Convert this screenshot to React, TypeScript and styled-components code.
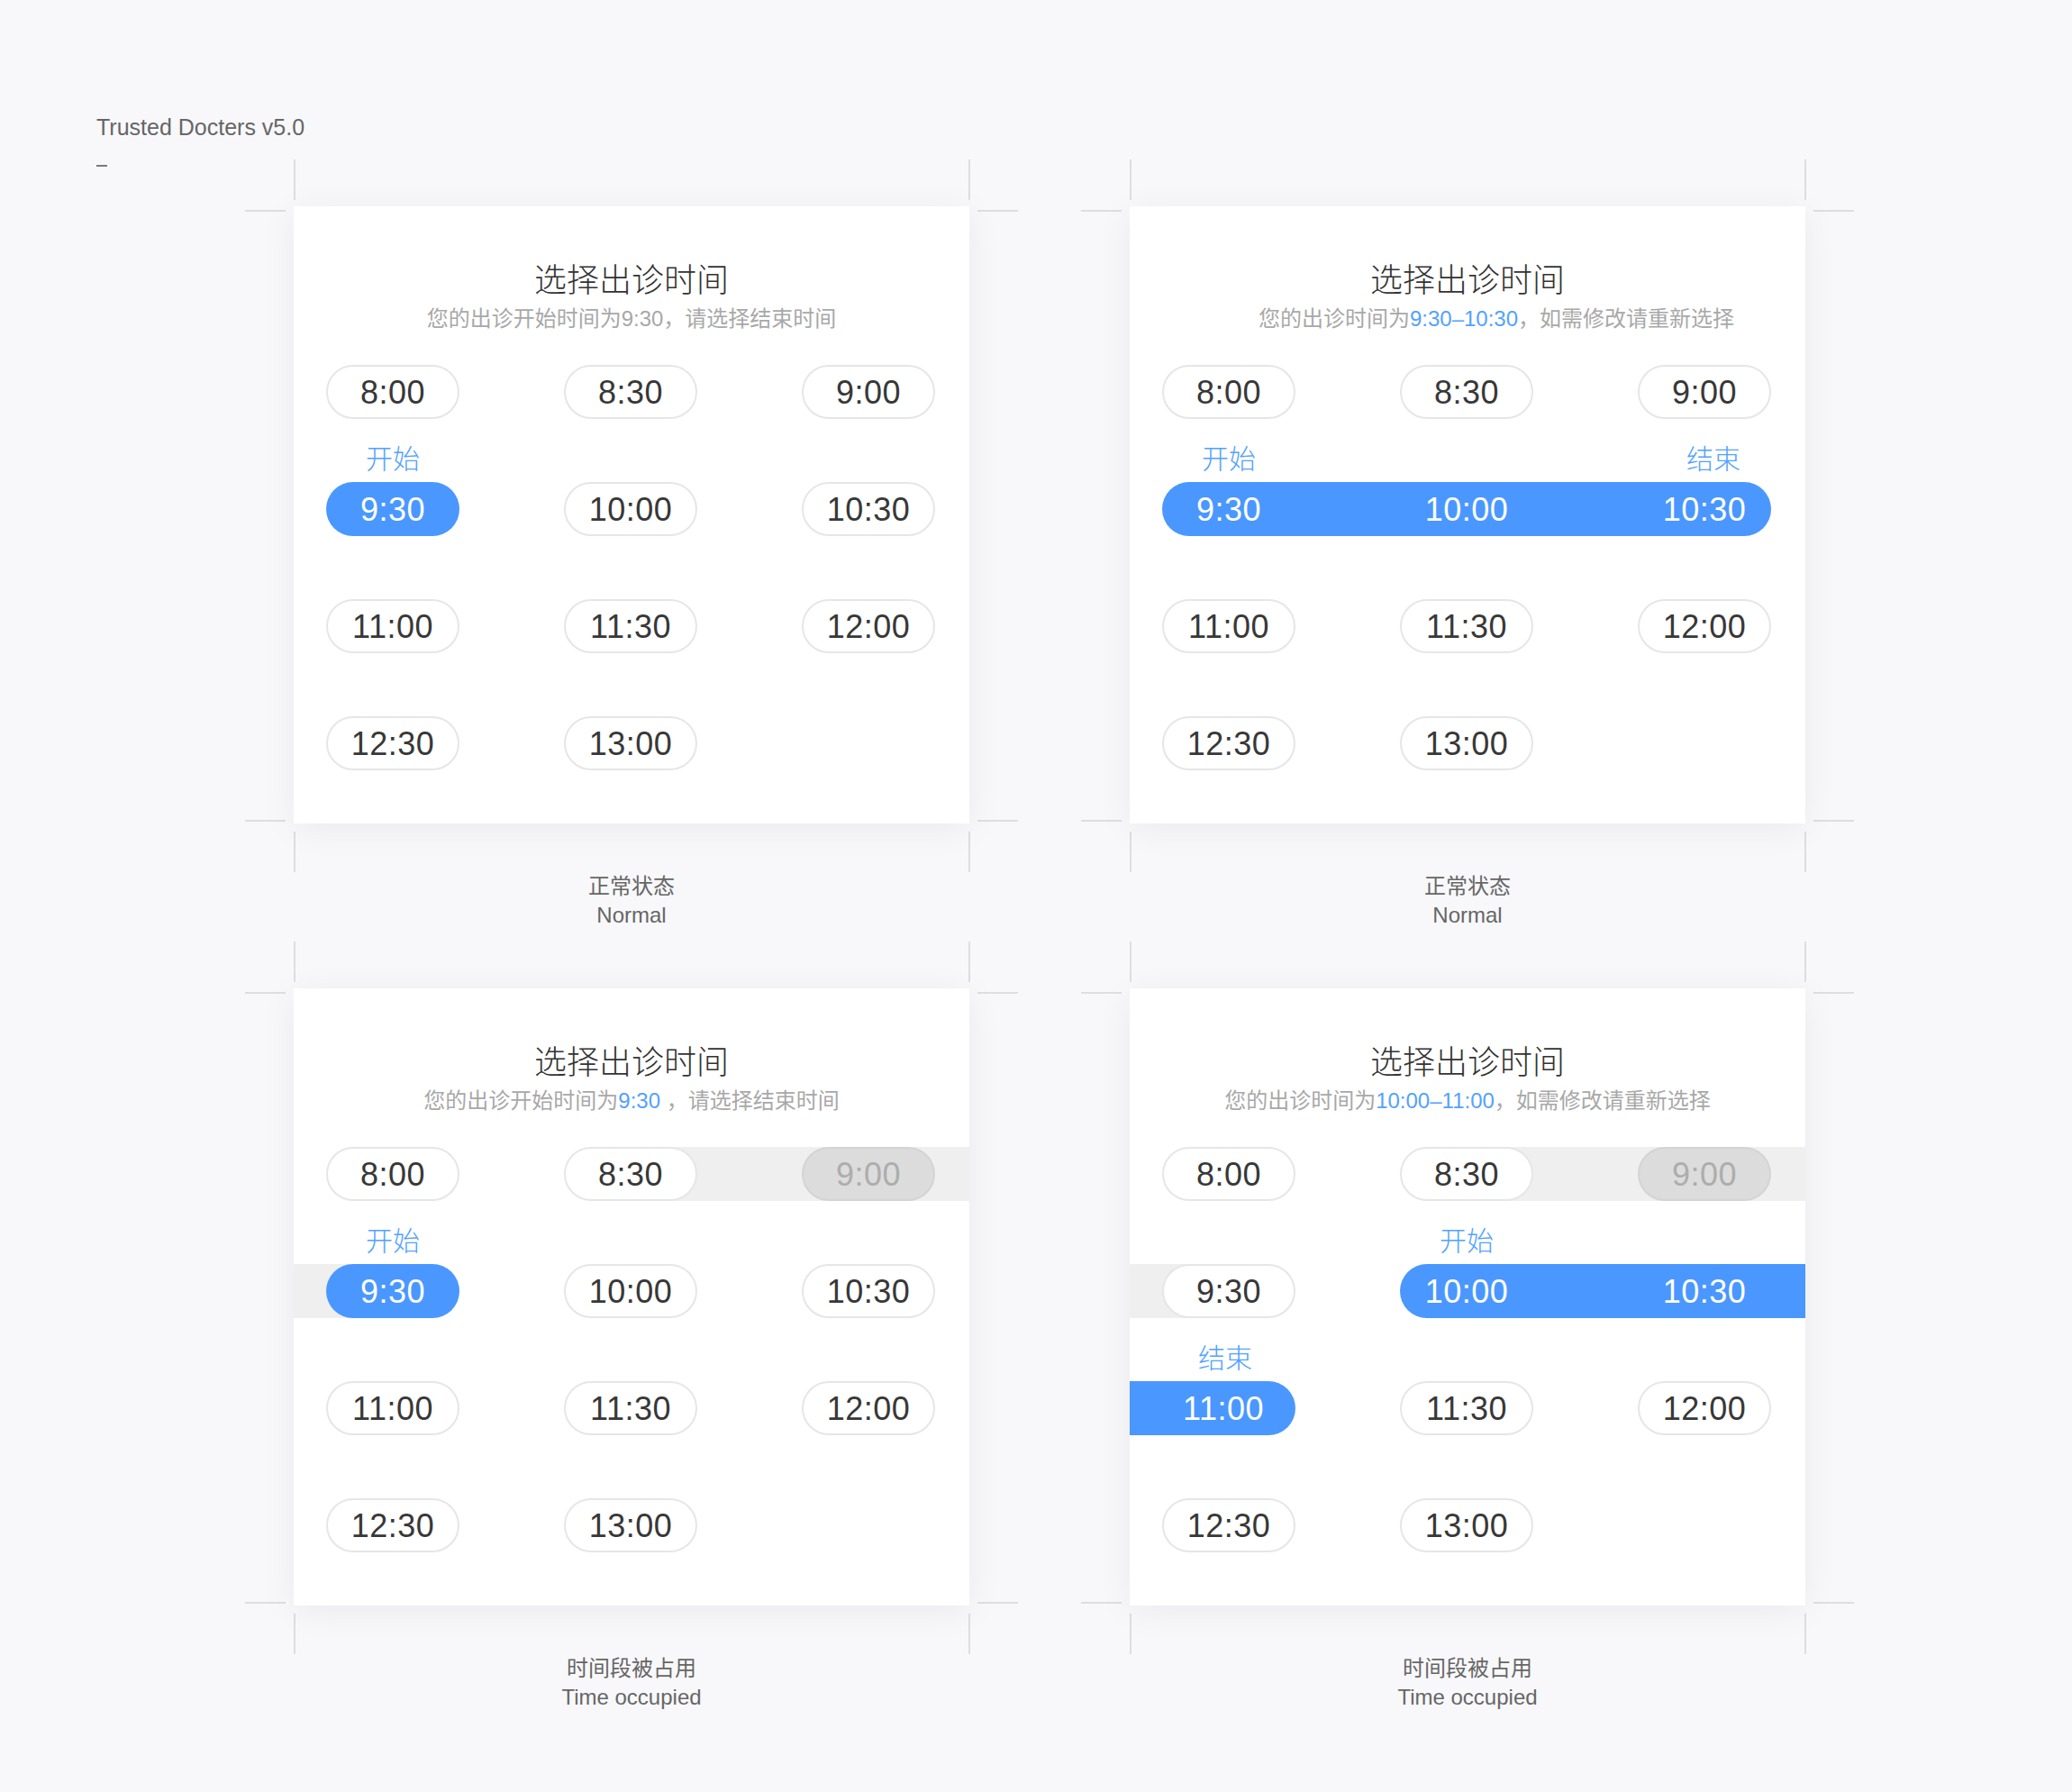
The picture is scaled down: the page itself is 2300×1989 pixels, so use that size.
import React from "react";
import styled, { createGlobalStyle } from "styled-components";

const GlobalStyle = createGlobalStyle`
  html, body {
    margin: 0;
    padding: 0;
    background: #f8f8fa;
  }
  body {
    font-family: "Liberation Sans", "Noto Sans CJK SC", sans-serif;
    -webkit-font-smoothing: antialiased;
  }
`;

const BLUE = "#4a97ff";
const LABEL_BLUE = "#52a2ff";
const GREY_BAND = "#efefef";

const Page = styled.div`
  width: 2300px;
  min-height: 1989px;
  box-sizing: border-box;
  padding: 127px 0 0 107px;
`;

const Brand = styled.div`
  font-size: 25px;
  line-height: 28px;
  color: #666;
  white-space: nowrap;
`;

const Body = styled.div`
  display: flex;
  margin-top: 22px;
`;

const Rail = styled.div`
  width: 165px;
  flex: none;
  padding-top: 6px;
`;

const Dash = styled.div`
  width: 12px;
  height: 2px;
  background: #7a7a7a;
`;

const Frames = styled.div`
  display: grid;
  grid-template-columns: repeat(2, 858px);
  column-gap: 70px;
`;

const Frame = styled.section`
  display: flex;
  flex-direction: column;
  width: 858px;
`;

const VMarks = styled.div<{ $pos: "top" | "bottom" }>`
  display: flex;
  justify-content: space-between;
  height: 45px;
  margin: ${(p) => (p.$pos === "top" ? "0 53px 7px 54px" : "9px 53px 0 54px")};
`;

const VLine = styled.div`
  width: 2px;
  height: 100%;
  background: #dedee1;
`;

const CardRow = styled.div`
  display: grid;
  grid-template-columns: 45px 750px 45px;
  column-gap: 9px;
`;

const HMarks = styled.div`
  display: flex;
  flex-direction: column;
  justify-content: space-between;
  padding: 4px 0 2px;
`;

const HLine = styled.div`
  height: 2px;
  background: #dedee1;
`;

const Card = styled.div`
  position: relative;
  height: 685px;
  box-sizing: border-box;
  padding-top: 56px;
  background: #fff;
  box-shadow: 0 6px 38px rgba(20, 20, 60, 0.06);
`;

const Title = styled.h2`
  margin: 0;
  font-family: "Noto Sans CJK SC", sans-serif;
  font-weight: 300;
  font-size: 36px;
  line-height: 46px;
  color: #333;
  text-align: center;
`;

const Subtitle = styled.p<{ $shift?: number }>`
  margin: 8px 0 0;
  padding-left: ${(p) => p.$shift ?? 0}px;
  font-size: 24px;
  line-height: 30px;
  color: #a8a8a8;
  text-align: center;
  white-space: nowrap;
`;

const Hi = styled.span`
  color: ${LABEL_BLUE};
`;

const Slots = styled.div`
  display: flex;
  flex-direction: column;
  gap: 70px;
  margin-top: 36px;
`;

const Row = styled.div`
  position: relative;
  display: grid;
  grid-template-columns: repeat(3, 148px);
  column-gap: 116px;
  padding: 0 38px 0 36px;
  height: 60px;
`;

const Band = styled.div<{ $tone: "grey" | "blue"; $radius: string }>`
  position: absolute;
  top: 0;
  height: 60px;
  background: ${(p) => (p.$tone === "blue" ? BLUE : GREY_BAND)};
  border-radius: ${(p) => p.$radius};
`;

const Cell = styled.div`
  position: relative;
  z-index: 1;
  height: 60px;
`;

type Variant = "normal" | "selected" | "disabled" | "onBar";

const Pill = styled.div<{ $variant: Variant; $nudge?: number }>`
  height: 60px;
  box-sizing: border-box;
  border-radius: 30px;
  display: flex;
  align-items: center;
  justify-content: center;
  padding: 2px ${(p) => (p.$nudge ? p.$nudge * 2 : 0)}px 0 0;
  font-size: 36px;
  letter-spacing: 0.5px;
  border: 2px solid
    ${(p) =>
      p.$variant === "normal"
        ? "#e6e6e6"
        : p.$variant === "disabled"
        ? "#d4d4d4"
        : "transparent"};
  background: ${(p) =>
    p.$variant === "selected"
      ? BLUE
      : p.$variant === "disabled"
      ? "#dcdcdc"
      : p.$variant === "onBar"
      ? "transparent"
      : "#fff"};
  color: ${(p) =>
    p.$variant === "selected" || p.$variant === "onBar"
      ? "#fff"
      : p.$variant === "disabled"
      ? "#adadad"
      : "#383838"};
`;

const Label = styled.div<{ $shift?: number }>`
  position: absolute;
  left: 0;
  right: 0;
  bottom: calc(100% + 13px);
  transform: translateX(${(p) => p.$shift ?? 0}px);
  font-family: "Noto Sans CJK SC", sans-serif;
  font-weight: 300;
  font-size: 30px;
  line-height: 30px;
  color: ${LABEL_BLUE};
  text-align: center;
`;

const Caption = styled.div`
  height: 77px;
  font-family: "Liberation Sans", "Noto Sans CJK SC", sans-serif;
  font-size: 24px;
  line-height: 32px;
  color: #666;
  text-align: center;
`;

type Slot = {
  time: string;
  variant?: Variant;
  label?: string;
  labelShift?: number;
  nudge?: number;
} | null;

type BandSpec = {
  tone: "grey" | "blue";
  left: number;
  right: number;
  radius?: string;
};

type RowSpec = { slots: Slot[]; bands?: BandSpec[] };

type CardSpec = {
  subtitle: React.ReactNode;
  subShift?: number;
  rows: RowSpec[];
  captionCn: string;
  captionEn: string;
};

const plain = (a: string, b: string, c: string): Slot[] => [
  { time: a },
  { time: b },
  { time: c },
];

const lastRow: RowSpec = { slots: [{ time: "12:30" }, { time: "13:00" }, null] };
const midRow: RowSpec = { slots: plain("11:00", "11:30", "12:00") };
const occupiedTop: RowSpec = {
  slots: [{ time: "8:00" }, { time: "8:30" }, { time: "9:00", variant: "disabled" }],
  bands: [{ tone: "grey", left: 374, right: 0 }],
};

const cards: CardSpec[] = [
  {
    subtitle: "您的出诊开始时间为9:30，请选择结束时间",
    rows: [
      { slots: plain("8:00", "8:30", "9:00") },
      {
        slots: [
          { time: "9:30", variant: "selected", label: "开始" },
          { time: "10:00" },
          { time: "10:30" },
        ],
      },
      midRow,
      lastRow,
    ],
    captionCn: "正常状态",
    captionEn: "Normal",
  },
  {
    subtitle: (
      <>
        您的出诊时间为<Hi>9:30–10:30</Hi>，如需修改请重新选择
      </>
    ),
    subShift: 64,
    rows: [
      { slots: plain("8:00", "8:30", "9:00") },
      {
        slots: [
          { time: "9:30", variant: "onBar", label: "开始" },
          { time: "10:00", variant: "onBar" },
          { time: "10:30", variant: "onBar", label: "结束", labelShift: 10 },
        ],
        bands: [{ tone: "blue", left: 36, right: 38, radius: "30px" }],
      },
      midRow,
      lastRow,
    ],
    captionCn: "正常状态",
    captionEn: "Normal",
  },
  {
    subtitle: (
      <>
        您的出诊开始时间为<Hi>9:30</Hi> ，请选择结束时间
      </>
    ),
    rows: [
      occupiedTop,
      {
        slots: [
          { time: "9:30", variant: "selected", label: "开始" },
          { time: "10:00" },
          { time: "10:30" },
        ],
        bands: [{ tone: "grey", left: 0, right: 640 }],
      },
      midRow,
      lastRow,
    ],
    captionCn: "时间段被占用",
    captionEn: "Time occupied",
  },
  {
    subtitle: (
      <>
        您的出诊时间为<Hi>10:00–11:00</Hi>，如需修改请重新选择
      </>
    ),
    rows: [
      occupiedTop,
      {
        slots: [
          { time: "9:30" },
          { time: "10:00", variant: "onBar", label: "开始" },
          { time: "10:30", variant: "onBar" },
        ],
        bands: [
          { tone: "grey", left: 0, right: 640 },
          { tone: "blue", left: 300, right: 0, radius: "30px 0 0 30px" },
        ],
      },
      {
        slots: [
          { time: "11:00", variant: "onBar", label: "结束", labelShift: -4, nudge: 6 },
          { time: "11:30" },
          { time: "12:00" },
        ],
        bands: [{ tone: "blue", left: 0, right: 566, radius: "0 30px 30px 0" }],
      },
      lastRow,
    ],
    captionCn: "时间段被占用",
    captionEn: "Time occupied",
  },
];

function SlotRow({ row }: { row: RowSpec }) {
  return (
    <Row>
      {row.bands?.map((b, i) => (
        <Band
          key={i}
          $tone={b.tone}
          $radius={b.radius ?? "0"}
          style={{ left: b.left, right: b.right }}
        />
      ))}
      {row.slots.map((s, i) =>
        s ? (
          <Cell key={i}>
            {s.label && <Label $shift={s.labelShift}>{s.label}</Label>}
            <Pill $variant={s.variant ?? "normal"} $nudge={s.nudge}>
              {s.time}
            </Pill>
          </Cell>
        ) : (
          <Cell key={i} />
        )
      )}
    </Row>
  );
}

function PickerFrame({ spec }: { spec: CardSpec }) {
  return (
    <Frame>
      <VMarks $pos="top">
        <VLine />
        <VLine />
      </VMarks>
      <CardRow>
        <HMarks>
          <HLine />
          <HLine />
        </HMarks>
        <Card>
          <Title>选择出诊时间</Title>
          <Subtitle $shift={spec.subShift}>{spec.subtitle}</Subtitle>
          <Slots>
            {spec.rows.map((r, i) => (
              <SlotRow key={i} row={r} />
            ))}
          </Slots>
        </Card>
        <HMarks>
          <HLine />
          <HLine />
        </HMarks>
      </CardRow>
      <VMarks $pos="bottom">
        <VLine />
        <VLine />
      </VMarks>
      <Caption>
        <div>{spec.captionCn}</div>
        <div>{spec.captionEn}</div>
      </Caption>
    </Frame>
  );
}

export default function App() {
  return (
    <>
      <GlobalStyle />
      <Page>
        <Brand>Trusted Docters v5.0</Brand>
        <Body>
          <Rail>
            <Dash />
          </Rail>
          <Frames>
            {cards.map((c, i) => (
              <PickerFrame key={i} spec={c} />
            ))}
          </Frames>
        </Body>
      </Page>
    </>
  );
}
